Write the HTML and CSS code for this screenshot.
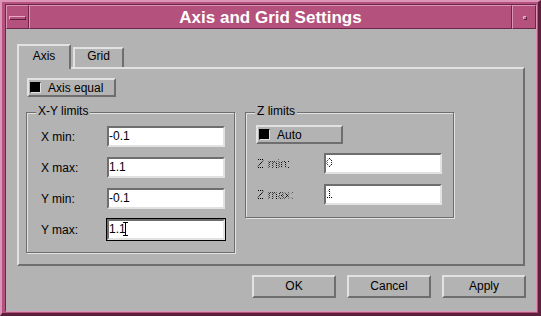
FILE: index.html
```html
<!DOCTYPE html>
<html>
<head>
<meta charset="utf-8">
<title>Axis and Grid Settings</title>
<link rel="stylesheet" href="styles.css">
</head>
<body>
<div class="window">
  <div class="inner">
    <div class="titlebar">
      <div class="tb-seg tb-min"><span class="min-glyph"></span></div>
      <div class="tb-seg tb-title">Axis and Grid Settings</div>
      <div class="tb-seg tb-close"><span class="close-glyph"></span></div>
    </div>
    <div class="body">
      <div class="tabs">
        <div class="tab tab-active">Axis</div>
        <div class="tab">Grid</div>
      </div>
      <div class="panel">
        <div class="toggle toggle-equal"><span class="ind"></span><span>Axis equal</span></div>
        <div class="groups">
          <div class="group group-xy">
            <span class="group-label">X-Y limits</span>
            <div class="form form-xy">
              <span class="lbl">X min:</span><div class="field">-0.1</div>
              <span class="lbl">X max:</span><div class="field">1.1</div>
              <span class="lbl">Y min:</span><div class="field">-0.1</div>
              <span class="lbl">Y max:</span><div class="field field-focus">1.1<svg class="ibeam" width="5" height="14" viewBox="0 0 5 14"><path d="M0 0.5H5M2.5 0.5V13.5M0 13.5H5" stroke="#000" stroke-width="1" fill="none"/></svg></div>
            </div>
          </div>
          <div class="group group-z">
            <span class="group-label">Z limits</span>
            <div class="toggle toggle-auto"><span class="ind"></span><span>Auto</span></div>
            <div class="form form-z">
              <span class="lbl stipple">Z min:</span><div class="field"><span class="stipple">0</span></div>
              <span class="lbl stipple">Z max:</span><div class="field"><span class="stipple">1</span></div>
            </div>
          </div>
        </div>
      </div>
      <div class="actions">
        <button class="btn">OK</button>
        <button class="btn">Cancel</button>
        <button class="btn">Apply</button>
      </div>
    </div>
  </div>
</div>
</body>
</html>
```

FILE: styles.css
```css
* { box-sizing: border-box; }

html, body {
  margin: 0;
  padding: 0;
  background: #b3b3b3;
}

body {
  font-family: "Liberation Sans", Arial, sans-serif;
  font-size: 12px;
  color: #000;
}

.window {
  width: 541px;
  height: 316px;
  display: flex;
  background: #b4517d;
  border-style: solid;
  border-width: 2px 3px 3px 2px;
  border-color: #dc94b8 #5c1f3c #5c1f3c #dc94b8;
  padding: 2px 1px 1px 3px;
}

.inner {
  flex: 1;
  display: flex;
  flex-direction: column;
  border: 1px solid;
  border-color: #6e2547 #dc94b8 #dc94b8 #6e2547;
  background: #b3b3b3;
}

/* title bar */
.titlebar {
  display: flex;
  height: 24px;
  flex: none;
}

.tb-seg {
  height: 24px;
  background: #b4517d;
  border: 1px solid;
  border-color: #dc94b8 #6e2547 #6e2547 #dc94b8;
  display: flex;
  align-items: center;
  justify-content: center;
}

.tb-min { width: 23px; }
.tb-close { width: 24px; }

.tb-title {
  flex: 1;
  color: #fff;
  font-weight: bold;
  font-size: 17px;
  line-height: 22px;
  padding-top: 1px;
}

.min-glyph {
  width: 17px;
  height: 4px;
  border: 1px solid;
  border-color: #e7a9c6 #5c1f3c #5c1f3c #e7a9c6;
  background: #b4517d;
  margin-top: 1px;
}

.close-glyph {
  width: 4px;
  height: 4px;
  border: 1px solid;
  border-color: #e7a9c6 #5c1f3c #5c1f3c #e7a9c6;
  background: #c8739a;
  margin-top: 1px;
  margin-left: 1px;
}

/* body */
.body {
  flex: 1;
  display: flex;
  flex-direction: column;
  padding: 15px 10px 0 11px;
}

.tabs {
  display: flex;
  align-items: flex-end;
  gap: 2px;
  height: 23px;
  flex: none;
}

.tab {
  width: 51px;
  height: 20px;
  border-style: solid;
  border-width: 2px 2px 0 2px;
  border-color: #e2e2e2 #6e6e6e #e2e2e2 #e2e2e2;
  background: #b3b3b3;
  text-align: center;
  line-height: 14px;
  padding-top: 0;
}

.tab-active {
  width: 54px;
  height: 25px;
  margin-bottom: -2px;
  position: relative;
  z-index: 1;
  padding-top: 3px;
}

.panel {
  width: 508px;
  height: 199px;
  flex: none;
  border: 2px solid;
  border-color: #e2e2e2 #6e6e6e #6e6e6e #e2e2e2;
  padding: 9px 0 0 7px;
}

/* toggle buttons */
.toggle {
  display: flex;
  align-items: center;
  gap: 7px;
  height: 19px;
  border: 2px solid;
  border-color: #e2e2e2 #6e6e6e #6e6e6e #e2e2e2;
  padding-left: 1px;
}

.toggle-equal {
  width: 89px;
  margin-left: 1px;
}

.toggle-auto {
  width: 87px;
}

.ind {
  width: 11px;
  height: 11px;
  background: #000;
  border: 1px solid;
  border-color: #000 #e2e2e2 #e2e2e2 #000;
}

/* groups */
.groups {
  display: flex;
  gap: 10px;
  margin-top: 15px;
  align-items: flex-start;
}

.group {
  position: relative;
  width: 209px;
  border: 1px solid #6e6e6e;
  box-shadow: inset 1px 1px 0 #e2e2e2, 1px 1px 0 #e2e2e2;
}

.group-xy {
  padding: 13px 9px 12px 14px;
}

.group-z {
  padding: 12px 11px 12px 10px;
}

.group-label {
  position: absolute;
  top: -9px;
  left: 9px;
  line-height: 14px;
  padding: 0 2px;
  background: #b3b3b3;
}

.form {
  display: grid;
  row-gap: 10px;
  align-items: center;
}

.form-xy {
  grid-template-columns: 66px 118px;
}

.form-z {
  grid-template-columns: 67px 118px;
  margin-top: 9px;
  padding-left: 1px;
}

.lbl {
  line-height: 14px;
}

.field {
  position: relative;
  height: 21px;
  background: #fff;
  border: 2px solid;
  border-color: #6e6e6e #e2e2e2 #e2e2e2 #6e6e6e;
  line-height: 16px;
  padding-left: 0;
}

.field-focus {
  outline: 1px solid #000;
}

.ibeam {
  position: absolute;
  left: 14px;
  top: 1px;
}

.stipple {
  color: transparent;
  background-image: repeating-conic-gradient(#000 0 25%, transparent 0 50%);
  background-size: 2px 2px;
  -webkit-background-clip: text;
  background-clip: text;
}

/* action buttons */
.actions {
  display: flex;
  justify-content: flex-end;
  gap: 11px;
  margin-top: 9px;
}

.btn {
  width: 84px;
  height: 23px;
  background: #b3b3b3;
  border: 2px solid;
  border-color: #e2e2e2 #6e6e6e #6e6e6e #e2e2e2;
  font-family: "Liberation Sans", Arial, sans-serif;
  font-size: 12px;
  color: #000;
  padding: 0;
  line-height: 17px;
}
```
